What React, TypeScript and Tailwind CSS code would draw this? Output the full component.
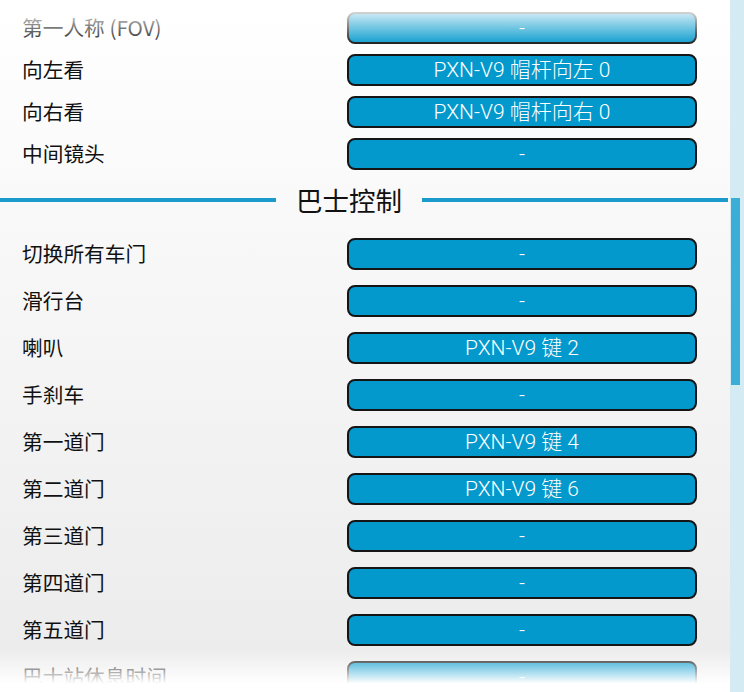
import React from "react";

const font = {
  fontFamily: '"Noto Sans CJK SC", "Noto Sans", sans-serif',
};
const btnFont = {
  fontFamily: 'Roboto, "Noto Sans CJK SC", sans-serif',
};

type Row = { label: string; value: string };

const top: Row[] = [
  { label: "第一人称 (FOV)", value: "-" },
  { label: "向左看", value: "PXN-V9 帽杆向左 0" },
  { label: "向右看", value: "PXN-V9 帽杆向右 0" },
  { label: "中间镜头", value: "-" },
];

const bus: Row[] = [
  { label: "切换所有车门", value: "-" },
  { label: "滑行台", value: "-" },
  { label: "喇叭", value: "PXN-V9 键 2" },
  { label: "手刹车", value: "-" },
  { label: "第一道门", value: "PXN-V9 键 4" },
  { label: "第二道门", value: "PXN-V9 键 6" },
  { label: "第三道门", value: "-" },
  { label: "第四道门", value: "-" },
  { label: "第五道门", value: "-" },
  { label: "巴士站休息时间", value: "-" },
];

function BindRow({ r }: { r: Row }) {
  return (
    <div className="flex items-center h-[32px] shrink-0">
      <div
        className="w-[347px] pl-[22px] text-[20.7px] leading-none text-[#111111] -mt-[2px]"
        style={font}
      >
        {r.label}
      </div>
      <div
        className="w-[350px] h-[32px] rounded-[8px] border-2 border-[#151515] bg-[#0399cc] flex items-center justify-center text-white text-[21px] font-light leading-none"
        style={btnFont}
      >
        {r.value}
      </div>
    </div>
  );
}

export default function App() {
  return (
    <div className="flex w-[744px] h-[692px] overflow-hidden">
      <div className="relative w-[730px] h-[692px] overflow-hidden bg-gradient-to-b from-white to-[#ebebeb]">
        <div className="flex flex-col pt-[12px]">
          <div className="flex flex-col gap-[10px]">
            {top.map((r) => (
              <BindRow key={r.label} r={r} />
            ))}
          </div>
          <div className="flex items-center h-[44px] mt-[8px] mb-[16px]">
            <div className="w-[276px] h-[4px] bg-[#1a9bcc]" />
            <div
              className="px-[20px] text-[26.5px] leading-none text-[#111111]"
              style={font}
            >
              巴士控制
            </div>
            <div className="flex-1 h-[4px] bg-[#1a9bcc] mr-[2px]" />
          </div>
          <div className="flex flex-col gap-[15px]">
            {bus.map((r) => (
              <BindRow key={r.label} r={r} />
            ))}
          </div>
        </div>
        <div className="absolute left-0 right-0 top-0 h-[46px] bg-gradient-to-b from-white from-10% to-transparent pointer-events-none" />
        <div className="absolute left-0 right-0 bottom-0 h-[42px] bg-gradient-to-t from-white from-20% to-transparent pointer-events-none" />
      </div>
      <div className="w-[14px] h-[692px] bg-[#d5ebf4] flex flex-col">
        <div className="h-[198px]" />
        <div className="w-[9px] ml-[1px] h-[187px] bg-[#3aaed6]" />
      </div>
    </div>
  );
}
